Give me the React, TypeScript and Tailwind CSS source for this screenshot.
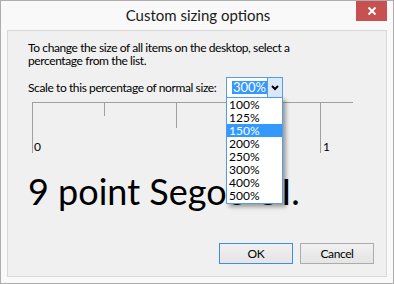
import React from "react";

const font = { fontFamily: 'Lato, "Noto Sans", sans-serif' };

export default function App() {
  const items = ["100%", "125%", "150%", "200%", "250%", "300%", "400%", "500%"];
  return (
    <div
      className="w-[394px] h-[284px] border border-[#adadad] bg-[#f9f9f9] flex flex-col text-black"
      style={font}
    >
      {/* title bar */}
      <div className="h-[29px] flex items-start relative">
        <div className="flex-1 text-center text-[15px] leading-[29px] text-[#1a1a1a] pl-[2px]">
          Custom sizing options
        </div>
        <div className="absolute right-[6px] top-0 w-[31px] h-[20px] bg-[#c75050] flex items-center justify-center">
          <svg width="10" height="10" viewBox="0 0 10 10">
            <path d="M1.5 1.5 L8.5 8.5 M8.5 1.5 L1.5 8.5" stroke="#fff" strokeWidth="2" />
          </svg>
        </div>
      </div>
      {/* client panel */}
      <div className="mx-[6px] h-[247px] border border-[#d9d9d9] bg-[#f0f0f0] flex flex-col text-[12px] leading-[13px] tracking-[-0.4px]">
        <p className="pt-[10px] pl-[20px] pr-[10px] whitespace-nowrap">
          To change the size of all items on the desktop, select a
          <br />
          percentage from the list.
        </p>
        <div className="mt-[10px] pl-[20px] flex items-center h-[21px] relative z-10">
          <span className="w-[198px] shrink-0 whitespace-nowrap">Scale to this percentage of normal size:</span>
          <div className="relative w-[57px] h-[21px] border border-[#569de5] bg-white flex tracking-normal">
            <div className="flex-1 flex items-center pl-[5px]">
              <span className="bg-[#3399ff] text-white px-[1px] leading-[13px] text-[13px]">300%</span>
            </div>
            <div className="w-[15px] h-full border-l border-[#569de5] bg-[#dae9f7] flex items-center justify-center">
              <svg width="8" height="6" viewBox="0 0 8 6">
                <path d="M1 1 L4 4 L7 1" stroke="#000" strokeWidth="2" fill="none" />
              </svg>
            </div>
            <div className="absolute left-[-1px] top-[19px] w-[57px] h-[107px] border border-[#569de5] bg-white shadow-[3px_3px_4px_rgba(0,0,0,0.35)] flex flex-col">
              {items.map((it) => (
                <div
                  key={it}
                  className={
                    it === "150%"
                      ? "h-[13px] pl-[2px] bg-[#3399ff] text-white"
                      : "h-[13px] pl-[2px]"
                  }
                >
                  {it}
                </div>
              ))}
            </div>
          </div>
        </div>
        {/* ruler */}
        <div className="mt-[4px] ml-[24px] relative w-[322px] h-[51px]">
          <svg width="322" height="51" className="block">
            <g stroke="#a0a0a0" strokeWidth="1">
              <path d="M0 0.5 H321" />
              <path d="M0.5 0 V51" />
              <path d="M72.5 0 V14" />
              <path d="M144.5 0 V26" />
              <path d="M216.5 0 V14" />
              <path d="M288.5 0 V51" />
            </g>
          </svg>
          <span className="absolute left-[2px] top-[38px]">0</span>
          <span className="absolute left-[291px] top-[38px]">1</span>
        </div>
        <div className="mt-[18px] pl-[20px] text-[36px] leading-[40px] tracking-normal whitespace-nowrap">
          9 point Segoe UI.
        </div>
        <div className="mt-auto pb-[12px] pr-[12px] flex justify-end gap-[7px]">
          <button className="w-[74px] h-[21px] border border-[#3d8ee0] bg-gradient-to-b from-[#f0f0f0] to-[#e5e5e5] text-[12px] leading-[13px]">
            OK
          </button>
          <button className="w-[74px] h-[21px] border border-[#acacac] bg-gradient-to-b from-[#f0f0f0] to-[#e5e5e5] text-[12px] leading-[13px]">
            Cancel
          </button>
        </div>
      </div>
    </div>
  );
}
